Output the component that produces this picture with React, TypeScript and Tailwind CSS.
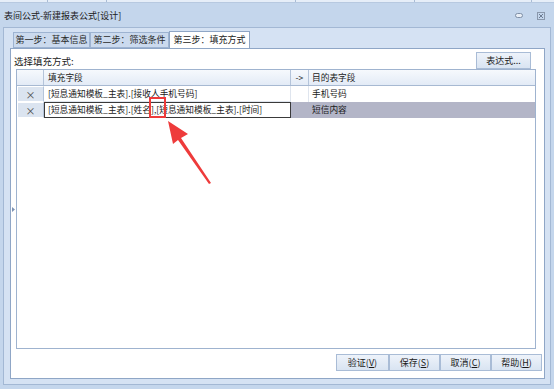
import React, { FC } from 'react';

const font = { fontFamily: '"Noto Sans CJK SC", "Noto Sans", sans-serif' };

interface IRow {
    source: string;
    target: string;
    selected?: boolean;
}

const rows: Array<IRow> = [
    { source: '[短息通知模板_主表].[接收人手机号码]', target: '手机号码' },
    { source: '[短息通知模板_主表].[姓名],[短息通知模板_主表].[时间]', target: '短信内容', selected: true },
];

const Tab: FC<{ label: string; active?: boolean; w: string }> = ({ label, active, w }) => (
    <div
        className={
            active
                ? `${w} h-[17px] bg-white border border-b-0 border-[#8fa6c6] flex items-center justify-center text-[#1a1a1a] -mb-px z-10`
                : `${w} h-[16px] mt-[1px] bg-[#cbdaee] border border-[#9db3d1] flex items-center justify-center text-[#2a2a2a]`
        }
    >
        {label}
    </div>
);

const Btn: FC<{ label: string; hot: string; w?: string }> = ({ label, hot, w = 'w-[51px]' }) => (
    <button className={`${w} h-[17px] border border-[#a9bcd6] bg-gradient-to-b from-[#eef3fa] to-[#d9e4f2] text-[#1a1a1a] flex items-center justify-center leading-none`}>
        {label}(<span className="underline">{hot}</span>)
    </button>
);

const App: FC = () => {
    return (
        <div className="w-[554px] h-[389px] bg-[#c4d6ec] flex flex-col overflow-hidden relative text-[9px]" style={font}>
            {/* strip of the window behind */}
            <div className="h-[3px] flex bg-[#e6eef8] border-b border-[#b7c9e0]">
                <div className="w-[48px] border-r border-[#a9bcd5]" />
                <div className="w-[59px] border-r border-[#a9bcd5]" />
                <div className="w-[189px] border-r border-[#a9bcd5]" />
                <div className="w-[119px] border-r border-[#a9bcd5]" />
                <div className="w-[117px] border-r border-[#a9bcd5]" />
            </div>

            {/* title bar */}
            <div className="h-[24px] flex items-center justify-between pl-[4px] pr-[8px] pt-[1px]">
                <span className="text-[9px] text-[#202020]">表间公式-新建报表公式[设计]</span>
                <div className="flex items-center gap-[14px] pr-[1px]">
                    <svg width="8" height="5" viewBox="0 0 8 5">
                        <rect x="0.5" y="0.5" width="7" height="4" rx="2" fill="#e8eef6" stroke="#7f8fa6" />
                    </svg>
                    <svg width="8" height="8" viewBox="0 0 8 8">
                        <rect x="0.5" y="0.5" width="7" height="7" fill="none" stroke="#8a98ac" />
                        <path d="M2 2 L6 6 M6 2 L2 6" stroke="#6d7c92" strokeWidth="1" />
                    </svg>
                </div>
            </div>

            {/* dialog frame */}
            <div className="flex-1 mx-[3px] mb-[4px] border border-[#a3b8d4] bg-[#d5e2f3] flex flex-col">
                {/* tabs */}
                <div className="flex pl-[9px] mt-[3px] h-[17px]">
                    <Tab label="第一步：基本信息" w="w-[77px]" />
                    <Tab label="第二步：筛选条件" w="w-[79px]" />
                    <Tab label="第三步：填充方式" w="w-[81px]" active />
                </div>

                {/* tab page */}
                <div className="flex-1 ml-[6px] mr-[5px] mb-[5px] bg-white border border-[#8fa6c6] flex flex-col">
                    <div className="flex items-end justify-between pl-[3px] pr-[13px] mt-[2px] h-[18px]">
                        <span className="text-[9.5px] text-[#1a1a1a] pb-[1px]">选择填充方式:</span>
                        <button className="w-[55px] h-[17px] border border-[#a9bcd6] bg-gradient-to-b from-[#eef3fa] to-[#d9e4f2] text-[#1a1a1a] leading-none">
                            表达式...
                        </button>
                    </div>

                    <div className="flex h-[280px]">
                        {/* splitter */}
                        <div className="w-[5px] flex items-center justify-center">
                            <svg width="3" height="5" viewBox="0 0 3 5">
                                <path d="M0 0 L3 2.5 L0 5 Z" fill="#7d92b3" />
                            </svg>
                        </div>

                        {/* grid */}
                        <div className="flex-1 mr-[8px] border border-[#9fb3cf] flex flex-col text-[8.7px]">
                            <div className="h-[16px] flex bg-gradient-to-b from-[#f6f9fd] to-[#e3ebf6] border-b border-[#a7b9d2] text-[#1a1a1a]">
                                <div className="w-[27px] border-r border-[#b4c4da]" />
                                <div className="w-[247px] border-r border-[#b4c4da] flex items-center pl-[4px]">填充字段</div>
                                <div className="w-[18px] border-r border-[#b4c4da] flex items-center justify-center">-&gt;</div>
                                <div className="flex-1 flex items-center pl-[3px]">目的表字段</div>
                            </div>
                            {rows.map((r, i) => (
                                <div key={i} className="h-[16px] flex text-[#1a1a1a]">
                                    <div className="w-[27px] bg-[#dbe4f0] border border-white border-r-[#b4c4da] flex items-center justify-center text-[#4a4a4a] text-[10px]">
                                        ×
                                    </div>
                                    {r.selected ? (
                                        <div className="w-[247px] border border-[#3a3a3a] bg-white flex items-center pl-[3px] whitespace-nowrap">
                                            {r.source}
                                        </div>
                                    ) : (
                                        <div className="w-[247px] border-r border-b border-[#dfe5ee] flex items-center pl-[4px] whitespace-nowrap">
                                            {r.source}
                                        </div>
                                    )}
                                    <div className={`w-[18px] border-r ${r.selected ? 'bg-[#b3b5c7] border-[#b3b5c7]' : 'border-[#dfe5ee]'}`} />
                                    <div className={`flex-1 flex items-center pl-[3px] ${r.selected ? 'bg-[#b3b5c7]' : ''}`}>{r.target}</div>
                                </div>
                            ))}
                        </div>
                    </div>

                    {/* buttons */}
                    <div className="flex justify-end mt-[5px] pr-[2px]">
                        <Btn label="验证" hot="V" w="w-[53px]" />
                        <Btn label="保存" hot="S" />
                        <Btn label="取消" hot="C" />
                        <Btn label="帮助" hot="H" />
                    </div>
                </div>
            </div>

            {/* annotation */}
            <div className="absolute left-[149px] top-[97px] w-[17px] h-[21px] border-2 border-[#ee3b3b]" />
            <svg className="absolute left-0 top-0" width="554" height="389" viewBox="0 0 554 389">
                <polygon points="168,121 188,134 181,138 211,183 209,184 178,140 173,144" fill="#ee3b3b" />
            </svg>
        </div>
    );
};

export default App;
